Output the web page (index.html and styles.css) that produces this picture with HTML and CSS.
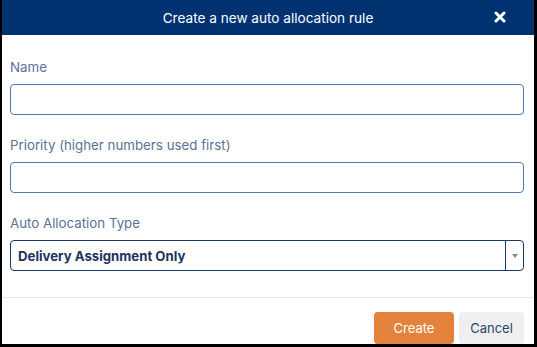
FILE: index.html
```html
<!DOCTYPE html>
<html lang="en">
<head>
  <meta charset="UTF-8" />
  <meta name="viewport" content="width=device-width, initial-scale=1.0"/>
  <title>Create a new auto allocation rule</title>
  <link rel="stylesheet" href="styles.css">
</head>

<body>
  <div class="modal">
    <div class="modal-header">
      <div class="modal-title">Create a new auto allocation rule</div>
      <button class="close" type="button" aria-label="Close">
        <svg width="12" height="12" viewBox="0 0 12 12">
          <path d="M2 2 L10 10 M10 2 L2 10" stroke="#fff" stroke-width="3" stroke-linecap="round"/>
        </svg>
      </button>
    </div>

    <form class="modal-body">
      <div class="field">
        <label>Name</label>
        <input type="text" name="name" />
      </div>

      <div class="field">
        <label>Priority (higher numbers used first)</label>
        <input type="text" name="priority" />
      </div>

      <div class="field">
        <label>Auto Allocation Type</label>
        <div class="select">
          <span class="select-value">Delivery Assignment Only</span>
          <span class="select-arrow"></span>
        </div>
      </div>
    </form>

    <div class="modal-footer">
      <button type="button" class="btn btn-create">Create</button>
      <button type="button" class="btn btn-cancel">Cancel</button>
    </div>
  </div>
</body>
</html>
```

FILE: styles.css
```css
* {
  box-sizing: border-box;
}

body {
  margin: 0;
  padding: 0;
  font-family: 'Inter', 'Roboto', sans-serif;
  background: #000;
  height: 347px;
  overflow: hidden;
}

.modal {
  width: 537px;
  height: 347px;
  background: #fff;
  border-left: 2px solid #000;
  border-right: 3px solid #000;
  border-bottom: 3px solid #000;
  overflow: hidden;
}

.modal-header {
  height: 35px;
  background: #003272;
  display: flex;
  align-items: center;
  justify-content: center;
  position: relative;
}

.modal-title {
  color: #fff;
  font-size: 13.6px;
}

.close {
  position: absolute;
  right: 27px;
  top: 10px;
  width: 14px;
  height: 14px;
  padding: 0;
  border: none;
  background: none;
  display: flex;
  align-items: center;
  justify-content: center;
}

.modal-body {
  margin: 0;
  padding: 23px 10px 0 8px;
}

.field {
  display: flex;
  flex-direction: column;
  margin-bottom: 21px;
}

.field:last-child {
  margin-bottom: 0;
}

.field label {
  font-size: 13.3px;
  line-height: 18px;
  color: #5d7197;
  margin-bottom: 8px;
}

.field input[type="text"] {
  height: 31px;
  border: 1px solid #5477ad;
  border-radius: 4px;
  padding: 0 8px;
  font-size: 13px;
  outline: none;
}

.select {
  height: 31px;
  border: 1px solid #1b3a6c;
  border-radius: 4px;
  display: flex;
  align-items: center;
}

.select-value {
  flex: 1;
  padding-left: 7px;
  font-size: 13.2px;
  font-weight: bold;
  color: #1e3360;
}

.select-arrow {
  width: 18px;
  height: 100%;
  border-left: 1px solid #1b3a6c;
  display: flex;
  align-items: center;
  justify-content: center;
}

.select-arrow::after {
  content: "";
  border-left: 3px solid transparent;
  border-right: 3px solid transparent;
  border-top: 4px solid #8a8a8a;
}

.modal-footer {
  margin-top: 26px;
  border-top: 1px solid #e5e5e5;
  padding: 14px 10px 0 0;
  display: flex;
  justify-content: flex-end;
  gap: 5px;
}

.btn {
  height: 32px;
  border: none;
  border-radius: 4px;
  font-family: inherit;
  font-size: 13px;
  cursor: pointer;
}

.btn-create {
  width: 80px;
  background: #e2823b;
  color: #fff;
}

.btn-cancel {
  width: 65px;
  background: #efefef;
  color: #2b4672;
}
```
